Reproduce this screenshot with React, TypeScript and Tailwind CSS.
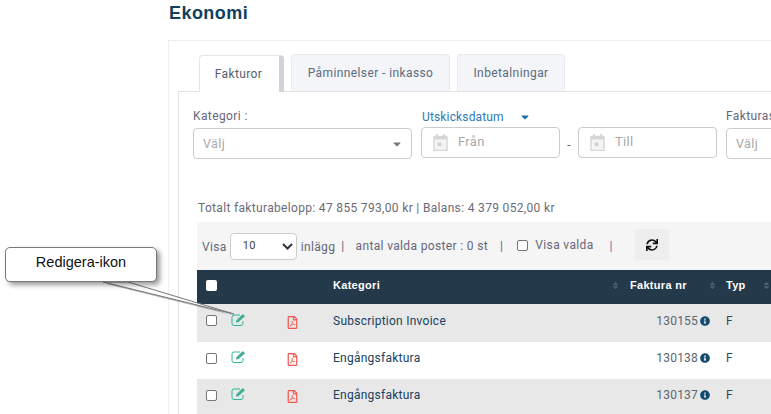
import React from "react";
import { FaRegFilePdf, FaSync, FaInfoCircle, FaSort, FaCaretDown } from "react-icons/fa";

function Cal() {
  return (
    <svg width="17" height="18" viewBox="0 0 18 20" className="shrink-0">
      <path d="M2 2h2V0h2v2h6V0h2v2h2a1 1 0 0 1 1 1v15a1 1 0 0 1-1 1H2a1 1 0 0 1-1-1V3a1 1 0 0 1 1-1z" fill="#d6d6d6" />
      <rect x="2.5" y="6" width="13" height="11.5" fill="#f4f4f4" />
      <rect x="6" y="9.5" width="4" height="4" fill="#d0d0d0" />
    </svg>
  );
}

function EditIcon() {
  return (
    <svg width="15" height="13" viewBox="0 0 15 13" className="shrink-0">
      <path d="M9 2H3a2 2 0 0 0-2 2v6.5a2 2 0 0 0 2 2h7a2 2 0 0 0 2-2V8" fill="none" stroke="#2bb89a" strokeWidth="1" />
      <path d="M5 9.5l.4-2.2L11.8 1 14 3.2 7.3 9.2z" fill="#3fae93" />
    </svg>
  );
}

function Box({ dark }: { dark?: boolean }) {
  return <span className={dark ? "block w-[11px] h-[11px] rounded-[2px] bg-white" : "block w-[11px] h-[11px] rounded-[2px] bg-white border border-[#767676]"} />;
}

function DateBox({ label }: { label: string }) {
  return (
    <div className="w-[139px] h-[31px] shrink-0 border border-[#cccccc] rounded-[4px] flex items-center pl-[10px] gap-[9px] text-[13px] text-[#a9a9a9] tracking-[0.3px]">
      <Cal />
      <span className="-mt-[2px]">{label}</span>
    </div>
  );
}

function Row({ cat, nr, shade, h }: { cat: string; nr: string; shade: boolean; h: string }) {
  return (
    <div className={`${h} flex items-center pb-[5px] text-[12px] tracking-[0.25px] ${shade ? "bg-[#e8e8e8]" : "bg-white"}`}>
      <div className="w-[34px] pl-[9px]"><Box /></div>
      <div className="w-[55px] -mt-[3px]"><EditIcon /></div>
      <div className="w-[47px] pt-[3px]"><FaRegFilePdf className="text-[#f2564f] text-[13px]" /></div>
      <div className="w-[284px] text-[#17415e]">{cat}</div>
      <div className="w-[93px] flex items-center justify-end gap-[2px] text-[#5d6570] tracking-[0.2px]">
        <span>{nr}</span>
        <FaInfoCircle className="text-[#134a70] text-[10px]" />
      </div>
      <div className="pl-[16px] text-[#33475b]">F</div>
    </div>
  );
}

export default function App() {
  return (
    <div className="relative w-[771px] h-[414px] overflow-hidden bg-white pl-[168px] font-['Roboto','Liberation_Sans',sans-serif]">
      <div className="h-[40px] pt-[2px] pl-[1px] text-[18px] leading-[22px] font-bold text-[#0f3f5f] tracking-[0.45px] font-['Liberation_Sans',sans-serif]">Ekonomi</div>
      <div className="h-[400px] w-[640px] border-l border-t border-[#eeeeee] pl-[9px]">
        <div className="h-[50px] flex items-end pl-[21px] gap-[7px] pt-[13px] text-[12px] tracking-[0.4px]">
          <div className="relative w-[85px] h-[37px] mb-[-1px] pr-[2px] z-10 bg-white border-l border-t border-[#e4e6ea] rounded-t-[4px] border-r-[5px] border-r-[#d0d3d7] flex items-center justify-center text-[#55606b]">Fakturor</div>
          <div className="w-[159px] h-[37px] bg-[#f3f5f9] border border-b-0 border-[#e8eaee] rounded-t-[4px] flex items-center justify-center text-[#5c6b7c]">Påminnelser - inkasso</div>
          <div className="w-[108px] h-[37px] bg-[#f3f5f9] border border-b-0 border-[#e8eaee] rounded-t-[4px] flex items-center justify-center text-[#5c6b7c]">Inbetalningar</div>
        </div>
        <div className="h-[330px] border-l border-t border-[#e4e4e4] pl-[14px]">
          <div className="h-[77px] pt-[15px] flex text-[12px] tracking-[0.4px]">
            <div className="w-[228px] shrink-0">
              <div className="h-[18px] text-[#65667a]">Kategori :</div>
              <div className="mt-[3px] w-[219px] h-[31px] border border-[#cccccc] rounded-[4px] flex items-center justify-between pl-[9px] pr-[8px] text-[#a9a9a9]">
                <span className="text-[12.5px] pt-[1px]">Välj</span>
                <FaCaretDown className="text-[#777777] text-[12px]" />
              </div>
            </div>
            <div className="w-[305px] shrink-0">
              <div className="h-[20px] pl-[1px] flex items-center text-[#2b7ab8] gap-[15px] tracking-[0.15px]">
                <span>Utskicksdatum</span>
                <FaCaretDown className="text-[#1c6fb0] text-[12px]" />
              </div>
              <div className="flex items-center">
                <DateBox label="Från" />
                <span className="w-[18px] text-center text-[#666666] mt-[5px]">-</span>
                <DateBox label="Till" />
              </div>
            </div>
            <div className="w-[100px] shrink-0">
              <div className="h-[18px] text-[#65667a] whitespace-nowrap">Fakturastatus</div>
              <div className="mt-[3px] w-[90px] h-[31px] border border-[#cccccc] rounded-[4px] flex items-center pl-[9px] text-[#a9a9a9]">
                <span className="text-[12.5px] pt-[1px]">Välj</span>
              </div>
            </div>
          </div>
          <div className="pl-[5px] h-[53px] pt-[32px] text-[12px] leading-[14px] tracking-[0.33px] text-[#6b6b78] whitespace-nowrap">Totalt fakturabelopp: 47 855 793,00 kr | Balans: 4 379 052,00 kr</div>
          <div className="ml-[4px] w-[574px]">
            <div className="h-[48px] bg-[#f5f5f5] flex items-center pl-[5px] text-[12px] tracking-[0.35px] text-[#65667a] whitespace-nowrap">
              <span className="mt-[1px]">Visa</span>
              <div className="ml-[3px] w-[67px] h-[27px] bg-white border border-[#cccccc] rounded-[4px] flex items-center justify-between pl-[12px] pr-[3px] text-[#444444] text-[11px]">
                <span>10</span>
                <svg width="11" height="7" viewBox="0 0 11 7"><path d="M1 1l4.5 4.5L10 1" fill="none" stroke="#333333" strokeWidth="2" /></svg>
              </div>
              <span className="ml-[4px] mt-[1px]">inlägg</span>
              <span className="ml-[6px]">|</span>
              <span className="ml-[11px]">antal valda poster : 0 st</span>
              <span className="ml-[12px]">|</span>
              <span className="ml-[14px] -mt-[2px]"><Box /></span>
              <span className="ml-[7px] -mt-[2px]">Visa valda</span>
              <span className="ml-[16px] text-[#5b6fa8]">|</span>
              <div className="ml-[22px] -mt-[3px] w-[34px] h-[31px] bg-[#eeeeee] rounded-[2px] flex items-center justify-center">
                <FaSync className="text-[#111111] text-[12px]" />
              </div>
            </div>
            <div className="h-[34px] pb-[3px] bg-[#243a4b] flex items-center text-[11px] font-bold text-white tracking-[0.3px] font-['Liberation_Sans',sans-serif]">
              <div className="w-[136px] pl-[9px]"><Box dark /></div>
              <div className="w-[287px] flex items-center justify-between">
                <span>Kategori</span>
                <FaSort className="text-[#4c5f6e] text-[9px]" />
              </div>
              <div className="w-[97px] flex items-center justify-between pl-[10px]">
                <span>Faktura nr</span>
                <FaSort className="text-[#4c5f6e] text-[9px]" />
              </div>
              <div className="pl-[9px] w-[54px] flex items-center justify-between">
                <span>Typ</span>
                <FaSort className="text-[#4c5f6e] text-[9px]" />
              </div>
            </div>
            <Row cat="Subscription Invoice" nr="130155" shade h="h-[38px]" />
            <Row cat="Engångsfaktura" nr="130138" shade={false} h="h-[37px]" />
            <Row cat="Engångsfaktura" nr="130137" shade h="h-[37px]" />
          </div>
        </div>
      </div>

      <svg className="absolute left-0 top-[240px]" width="250" height="90" viewBox="0 0 250 90">
        <polygon points="106,44 131,44 236,76" fill="#000000" opacity="0.28" />
        <polygon points="103,42 128,42 234,74" fill="#ffffff" stroke="#777777" strokeWidth="1" />
      </svg>
      <div className="absolute left-[5px] top-[247px] w-[152px] h-[35px] bg-white border border-[#777777] rounded-[5px] shadow-[3px_3px_5px_rgba(0,0,0,0.4)] flex items-center justify-center pb-[4px] text-[14.5px] text-[#111111] font-['Liberation_Sans',sans-serif]">Redigera-ikon</div>
    </div>
  );
}
